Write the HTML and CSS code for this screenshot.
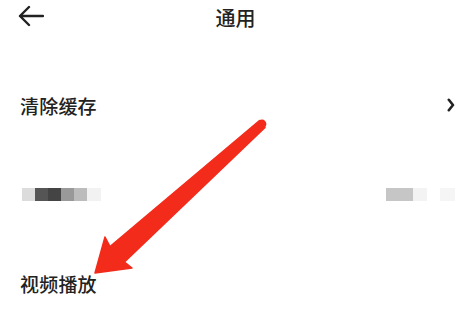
FILE: index.html
```html
<!DOCTYPE html>
<html lang="zh">
<head>
<meta charset="utf-8">
<title>通用</title>
<link rel="stylesheet" href="styles.css">
</head>
<body>
<div class="page">
  <header class="header">
    <svg class="back" width="26" height="22" viewBox="0 0 26 22" aria-hidden="true">
      <path d="M25 11H2M11 2L2 11l9 9" fill="none" stroke="#222" stroke-width="2.4" stroke-linecap="round" stroke-linejoin="round"/>
    </svg>
    <h1 class="title">通用</h1>
  </header>
  <ul class="list">
    <li class="row">
      <span class="label">清除缓存</span>
      <svg class="chev" width="8" height="14" viewBox="0 0 8 14" aria-hidden="true">
        <path d="M1.8 1.8L6 7l-4.2 5.2" fill="none" stroke="#222" stroke-width="2.6" stroke-linecap="round" stroke-linejoin="round"/>
      </svg>
    </li>
    <li class="row">
      <span class="blur-left">
        <i class="px p1"></i><i class="px p2"></i><i class="px p3"></i><i class="px p4"></i><i class="px p5"></i><i class="px p6"></i>
      </span>
      <span class="blur-right">
        <i class="px q1"></i><i class="px q2"></i><i class="px q3"></i><i class="px q4"></i>
      </span>
    </li>
    <li class="row">
      <span class="label">视频播放</span>
    </li>
  </ul>
  <svg class="pointer" width="473" height="315" viewBox="0 0 473 315" aria-hidden="true">
    <polygon points="259.5,120.5 110,246.5 105,237 95,273 132,268 124.5,262 265,127.5" fill="#f32b1b" stroke="#f32b1b" stroke-width="1.5" stroke-linejoin="round"/>
    <circle cx="262" cy="124" r="4.4" fill="#f32b1b"/>
  </svg>
</div>
</body>
</html>
```

FILE: styles.css
```css
* { box-sizing: border-box; }
html, body { margin: 0; padding: 0; background: #fff; }
body {
  font-family: "Noto Sans CJK SC", "Noto Sans", sans-serif;
  color: #222;
}
.page {
  position: relative;
  width: 473px;
  height: 315px;
  overflow: hidden;
}
.header {
  position: relative;
  height: 36px;
  display: flex;
  align-items: center;
  justify-content: center;
}
.back {
  position: absolute;
  left: 18px;
  top: 5px;
}
.title {
  margin: 0 0 0 -2px;
  font-size: 20px;
  font-weight: 500;
  line-height: 36px;
}
.list {
  list-style: none;
  margin: 0;
  padding: 24px 0 0;
}
.row {
  height: 90px;
  display: flex;
  align-items: center;
  justify-content: space-between;
  padding: 0 18px 0 20px;
}
.row:nth-child(2) { height: 88px; }
.label {
  font-size: 19px;
  font-weight: 500;
  letter-spacing: 0.2px;
}
.chev { display: block; }
.blur-left, .blur-right {
  display: flex;
  height: 13px;
  filter: blur(0.6px);
}
.blur-left { margin-left: 2px; }
.px { display: block; height: 13px; width: 13px; }
.p1 { background: #dcdcdc; }
.p2 { background: #555; }
.p3 { background: #444; }
.p4 { background: #999; }
.p5 { background: #bcbcbc; width: 13px; }
.p6 { background: #f2f2f2; width: 14px; }
.q1 { background: #c6c6c6; width: 27px; }
.q2 { background: #f3f3f3; width: 14px; }
.q3 { background: #fff; width: 13px; }
.q4 { background: #f5f5f5; width: 15px; }
.pointer {
  position: absolute;
  left: 0;
  top: 0;
  pointer-events: none;
}
```
